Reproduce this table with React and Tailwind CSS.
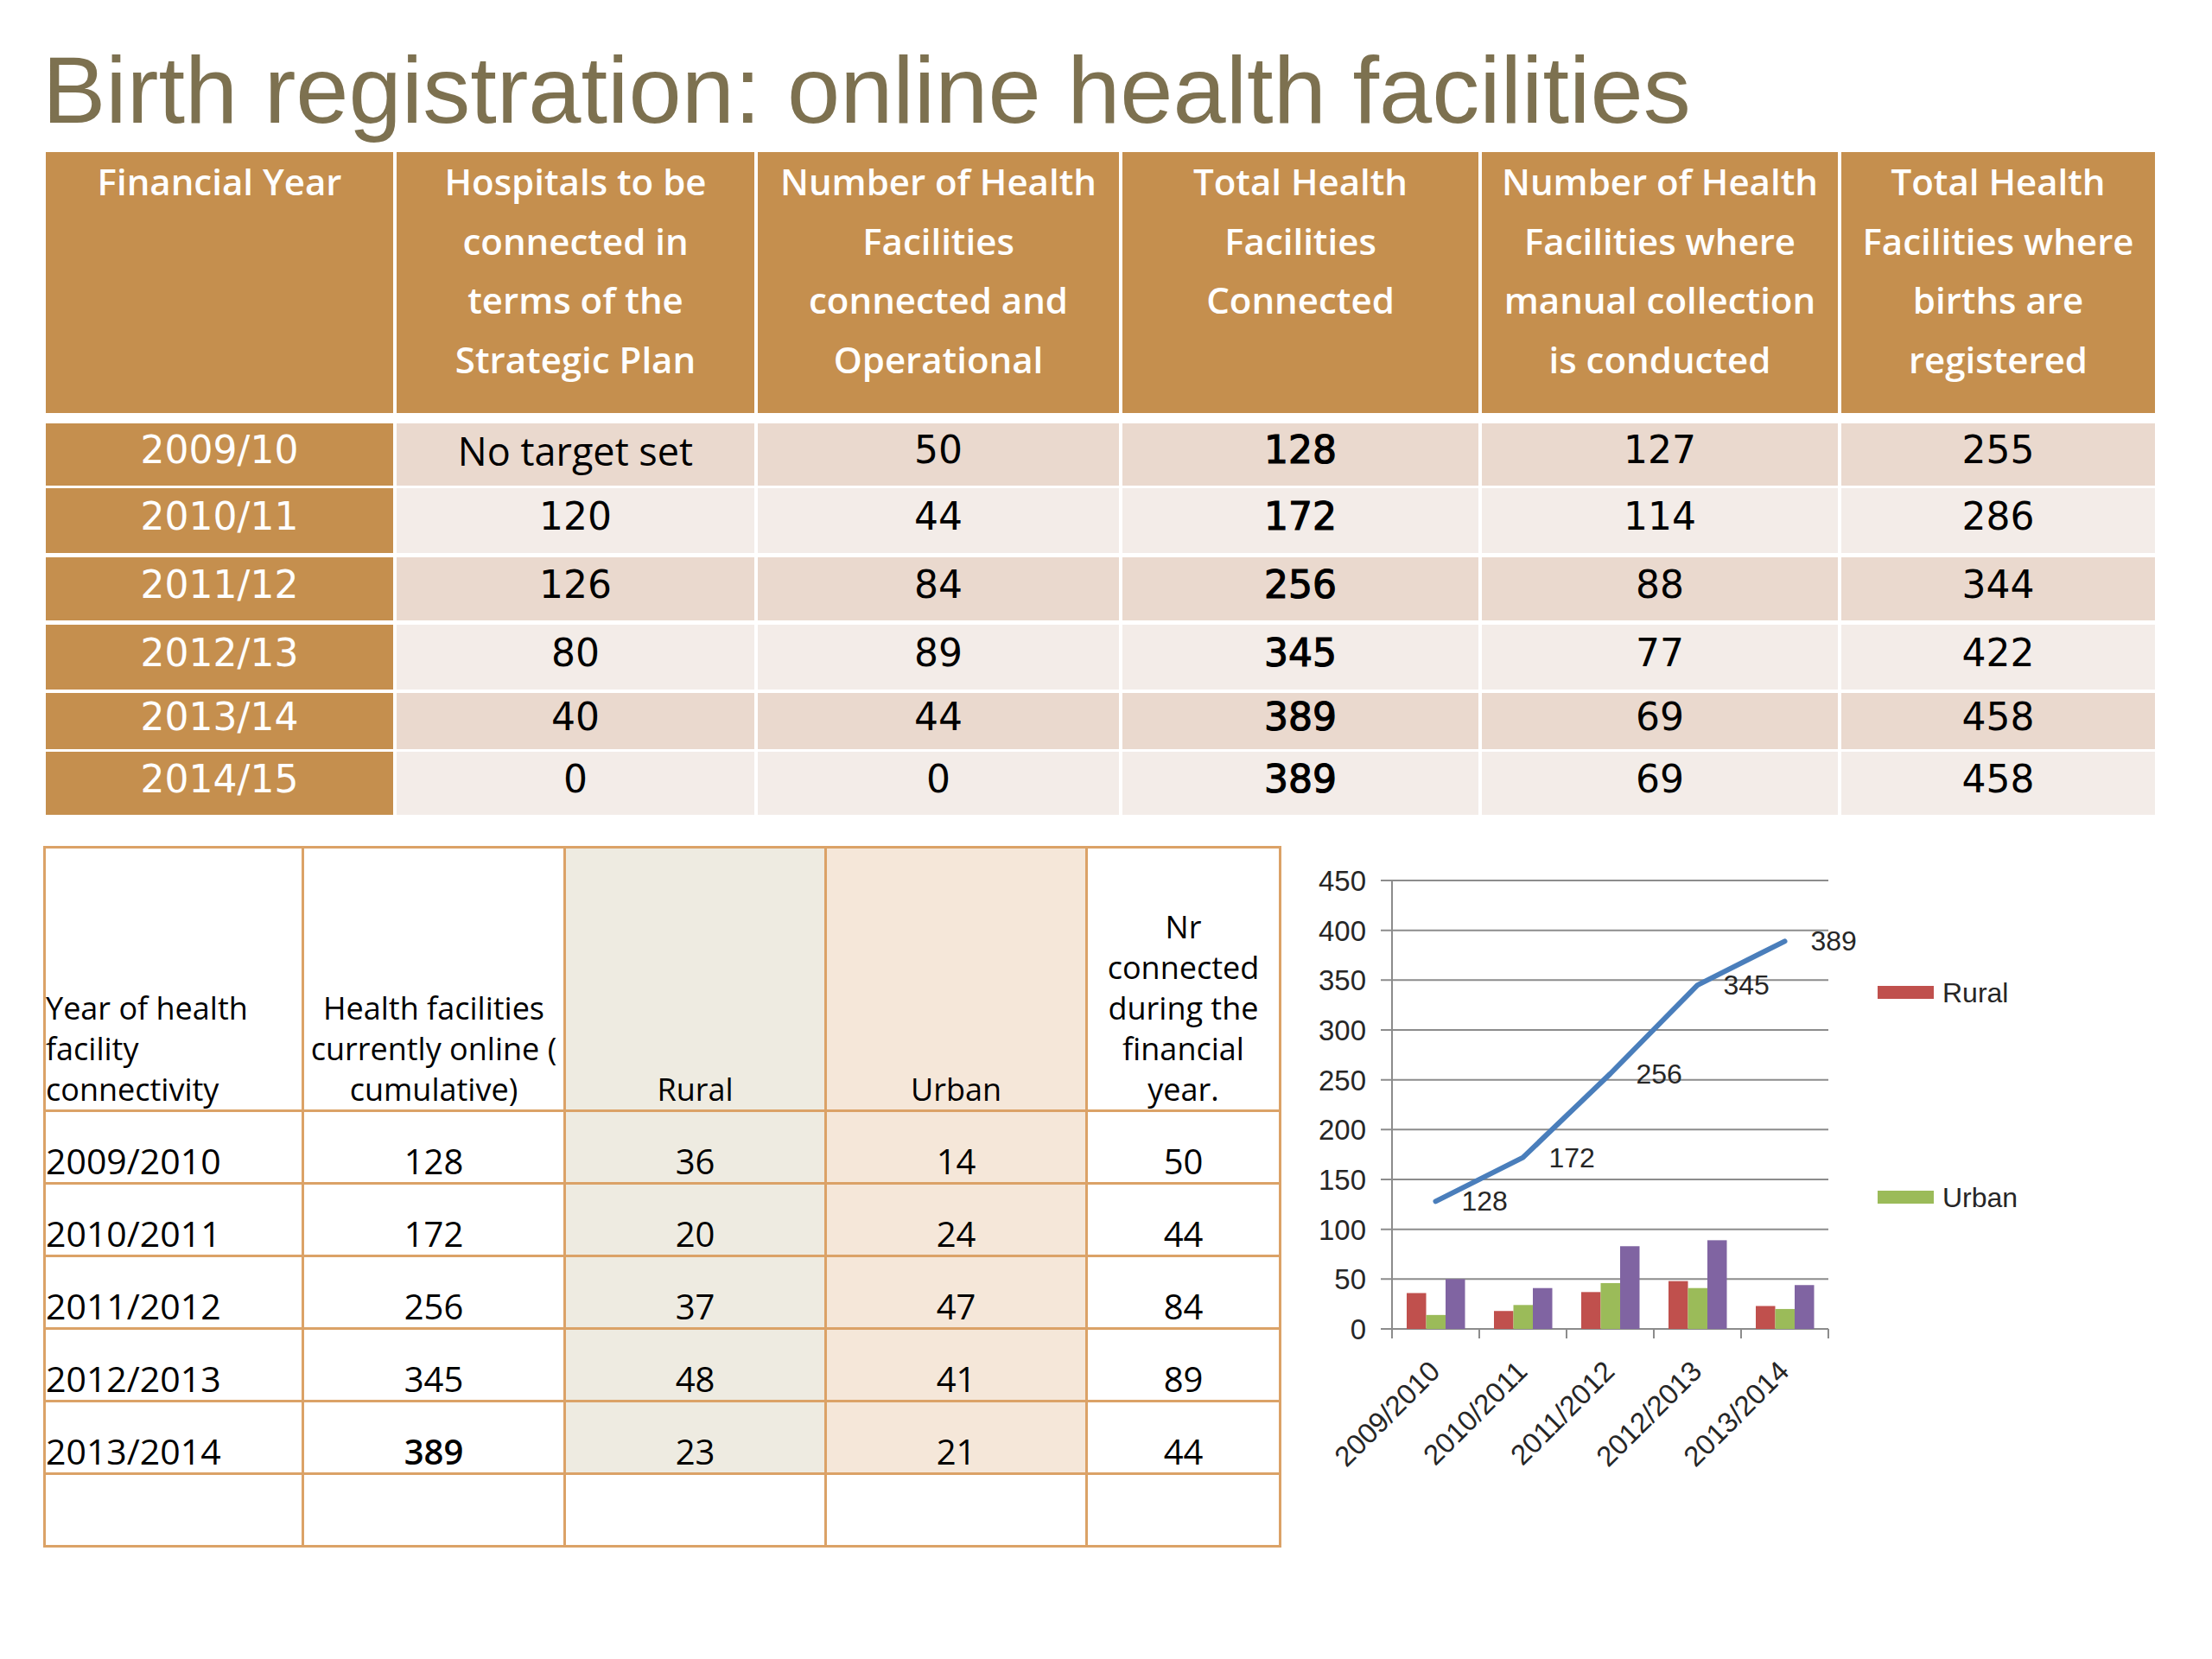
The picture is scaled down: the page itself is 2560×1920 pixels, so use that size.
import React from "react";

const headers = [
  ["Financial Year"],
  ["Hospitals to be", "connected in", "terms of the", "Strategic Plan"],
  ["Number of Health", "Facilities", "connected and", "Operational"],
  ["Total Health", "Facilities", "Connected"],
  ["Number of Health", "Facilities where", "manual collection", "is conducted"],
  ["Total Health", "Facilities where", "births are", "registered"],
];

const rows = [
  ["2009/10", "No target set", "50", "128", "127", "255"],
  ["2010/11", "120", "44", "172", "114", "286"],
  ["2011/12", "126", "84", "256", "88", "344"],
  ["2012/13", "80", "89", "345", "77", "422"],
  ["2013/14", "40", "44", "389", "69", "458"],
  ["2014/15", "0", "0", "389", "69", "458"],
];

// row heights and the white gap above each row, taken from the slide
const rowH = ["h-[72px] mt-[12px]", "h-[75px] mt-[3px]", "h-[73px] mt-[5px]", "h-[75px] mt-[5px]", "h-[65px] mt-[4px]", "h-[73px] mt-[3px]"];

const connectivity = [
  ["2009/2010", "128", "36", "14", "50"],
  ["2010/2011", "172", "20", "24", "44"],
  ["2011/2012", "256", "37", "47", "84"],
  ["2012/2013", "345", "48", "41", "89"],
  ["2013/2014", "389", "23", "21", "44"],
];

const gridCols = "grid grid-cols-[402px_414px_418px_412px_412px_363px] gap-x-[4px]";
const lowerCols = "grid grid-cols-[299px_303px_302px_302px_224px]";

function TopTable() {
  return (
    <div className="ml-[53px] mt-[17px]" style={{ fontFamily: "'Open Sans', sans-serif" }}>
      <div className={`${gridCols} h-[302px]`}>
        {headers.map((lines, i) => (
          <div key={i} className="bg-[#c58f4e] text-white text-center text-[42px] font-semibold leading-[68.6px]">
            {lines.map((l) => (
              <div key={l}>{l}</div>
            ))}
          </div>
        ))}
      </div>

      {rows.map((row, r) => (
        <div key={r} className={`${gridCols} ${rowH[r]}`}>
          {row.map((cell, c) => {
            let cls = r % 2 === 0 ? "bg-[#ead9ce] text-black" : "bg-[#f3ece8] text-black";
            if (c === 0) cls = "bg-[#c58f4e] text-white";
            if (c === 3) cls += " [-webkit-text-stroke:1.2px_black]";
            // digits in the slide are wide, DejaVu gets closest
            const numeric = /^[0-9/]+$/.test(cell);
            return (
              <div
                key={c}
                className={`${cls} flex items-center justify-center pb-[10px] leading-none ${numeric ? "text-[44px]" : "text-[45px]"}`}
                style={numeric ? { fontFamily: "'DejaVu Sans', sans-serif" } : undefined}
              >
                {cell}
              </div>
            );
          })}
        </div>
      ))}
    </div>
  );
}

function LowerTable() {
  const cell = "border-r-[3px] border-b-[3px] border-[#dba267]";
  const colBg = ["bg-white", "bg-white", "bg-[#eeebe1]", "bg-[#f5e7d9]", "bg-white"];
  return (
    <div
      className="ml-[50px] w-[1433px] border-l-[3px] border-t-[3px] border-[#dba267] text-black"
      style={{ fontFamily: "'Open Sans', sans-serif" }}
    >
      <div className={`${lowerCols} h-[305px] text-[36px] leading-[47px]`}>
        <div className={`${cell} flex flex-col justify-end`}>
          <div>Year of health</div>
          <div>facility</div>
          <div>connectivity</div>
        </div>
        <div className={`${cell} flex flex-col justify-end text-center`}>
          <div>Health facilities</div>
          <div>currently online (</div>
          <div>cumulative)</div>
        </div>
        <div className={`${cell} ${colBg[2]} flex flex-col justify-end text-center`}>Rural</div>
        <div className={`${cell} ${colBg[3]} flex flex-col justify-end text-center`}>Urban</div>
        <div className={`${cell} flex flex-col justify-end text-center`}>
          <div>Nr</div>
          <div>connected</div>
          <div>during the</div>
          <div>financial</div>
          <div>year.</div>
        </div>
      </div>

      {connectivity.map((row, r) => (
        <div key={r} className={`${lowerCols} h-[84px] leading-none`}>
          {row.map((v, c) => (
            <div
              key={c}
              className={`${cell} ${colBg[c]} flex items-end pb-[4px] ${
                c === 0 ? "justify-start text-[41px]" : "justify-center text-[40px]"
              } ${r === 4 && c === 1 ? "font-semibold" : ""}`}
            >
              {v}
            </div>
          ))}
        </div>
      ))}

      <div className={`${lowerCols} h-[84px]`}>
        {[0, 1, 2, 3, 4].map((c) => (
          <div key={c} className={cell}></div>
        ))}
      </div>
    </div>
  );
}

function Chart() {
  // page coordinates, shifted into the svg's own box
  const ox = 1500;
  const oy = 979;
  const X = (x) => x - ox;
  const Y = (y) => y - oy;
  const yOf = (v) => 1538 - (v * 519) / 450;

  const cats = ["2009/2010", "2010/2011", "2011/2012", "2012/2013", "2013/2014"];
  const rural = [36, 18, 37, 48, 23];
  const urban = [14, 24, 46, 41, 20];
  const total = [50, 41, 83, 89, 44];
  const line = [128, 172, 256, 345, 389];
  const x0 = 1611;
  const catW = 101;
  const barW = 22.5;
  const ticks = [0, 50, 100, 150, 200, 250, 300, 350, 400, 450];
  const grey = "#8c8c8c";

  const pts = line.map((v, i) => [X(x0 + i * catW + 50.5), Y(yOf(v))]);

  return (
    <svg width="1000" height="780" className="ml-[17px] shrink-0" style={{ fontFamily: "'Liberation Sans', Arial, sans-serif" }}>
      {ticks.map((v) => (
        <g key={v}>
          <line x1={X(1598)} x2={X(2116)} y1={Y(yOf(v))} y2={Y(yOf(v))} stroke={grey} strokeWidth="2" />
          <text x={X(1581)} y={Y(yOf(v)) + 12} textAnchor="end" fontSize="33" fill="#262626">
            {v}
          </text>
        </g>
      ))}
      <line x1={X(x0)} x2={X(x0)} y1={Y(1019)} y2={Y(1538)} stroke={grey} strokeWidth="2" />
      {[0, 1, 2, 3, 4, 5].map((i) => (
        <line key={i} x1={X(x0 + i * catW)} x2={X(x0 + i * catW)} y1={Y(1538)} y2={Y(1549)} stroke={grey} strokeWidth="2" />
      ))}

      {cats.map((c, i) => {
        const left = x0 + i * catW + 17;
        const series = [
          [rural[i], "#c0504d"],
          [urban[i], "#9bbb59"],
          [total[i], "#8064a2"],
        ];
        return (
          <g key={c}>
            {series.map(([v, col], s) => (
              <rect key={s} x={X(left + s * barW)} y={Y(yOf(v))} width={barW} height={1538 - yOf(v)} fill={col} />
            ))}
            <text
              transform={`translate(${X(x0 + i * catW + 57.5)} ${Y(1589)}) rotate(-45)`}
              textAnchor="end"
              fontSize="33"
              fill="#262626"
            >
              {c}
            </text>
          </g>
        );
      })}

      <polyline
        points={pts.map((p) => p.join(",")).join(" ")}
        fill="none"
        stroke="#4a7ebb"
        strokeWidth="6"
        strokeLinejoin="round"
        strokeLinecap="round"
      />
      {line.map((v, i) => (
        <text key={v} x={pts[i][0] + 30} y={pts[i][1] + 11} fontSize="32" fill="#262626">
          {v}
        </text>
      ))}

      <rect x={X(2173)} y={Y(1141)} width="65" height="15" fill="#c0504d" />
      <text x={X(2248)} y={Y(1160)} fontSize="32" fill="#262626">
        Rural
      </text>
      <rect x={X(2173)} y={Y(1378)} width="65" height="15" fill="#9bbb59" />
      <text x={X(2248)} y={Y(1397)} fontSize="32" fill="#262626">
        Urban
      </text>
    </svg>
  );
}

export default function App() {
  return (
    <div className="w-[2560px] h-[1920px] bg-white overflow-hidden">
      <h1
        className="pl-[49px] pt-[49px] h-[159px] text-[110px] leading-none text-[#7d7150] whitespace-nowrap"
        style={{ fontFamily: "'Liberation Sans', Arial, sans-serif" }}
      >
        Birth registration: online health facilities
      </h1>

      <TopTable />

      <div className="flex items-start mt-[36px]">
        <LowerTable />
        <Chart />
      </div>
    </div>
  );
}
